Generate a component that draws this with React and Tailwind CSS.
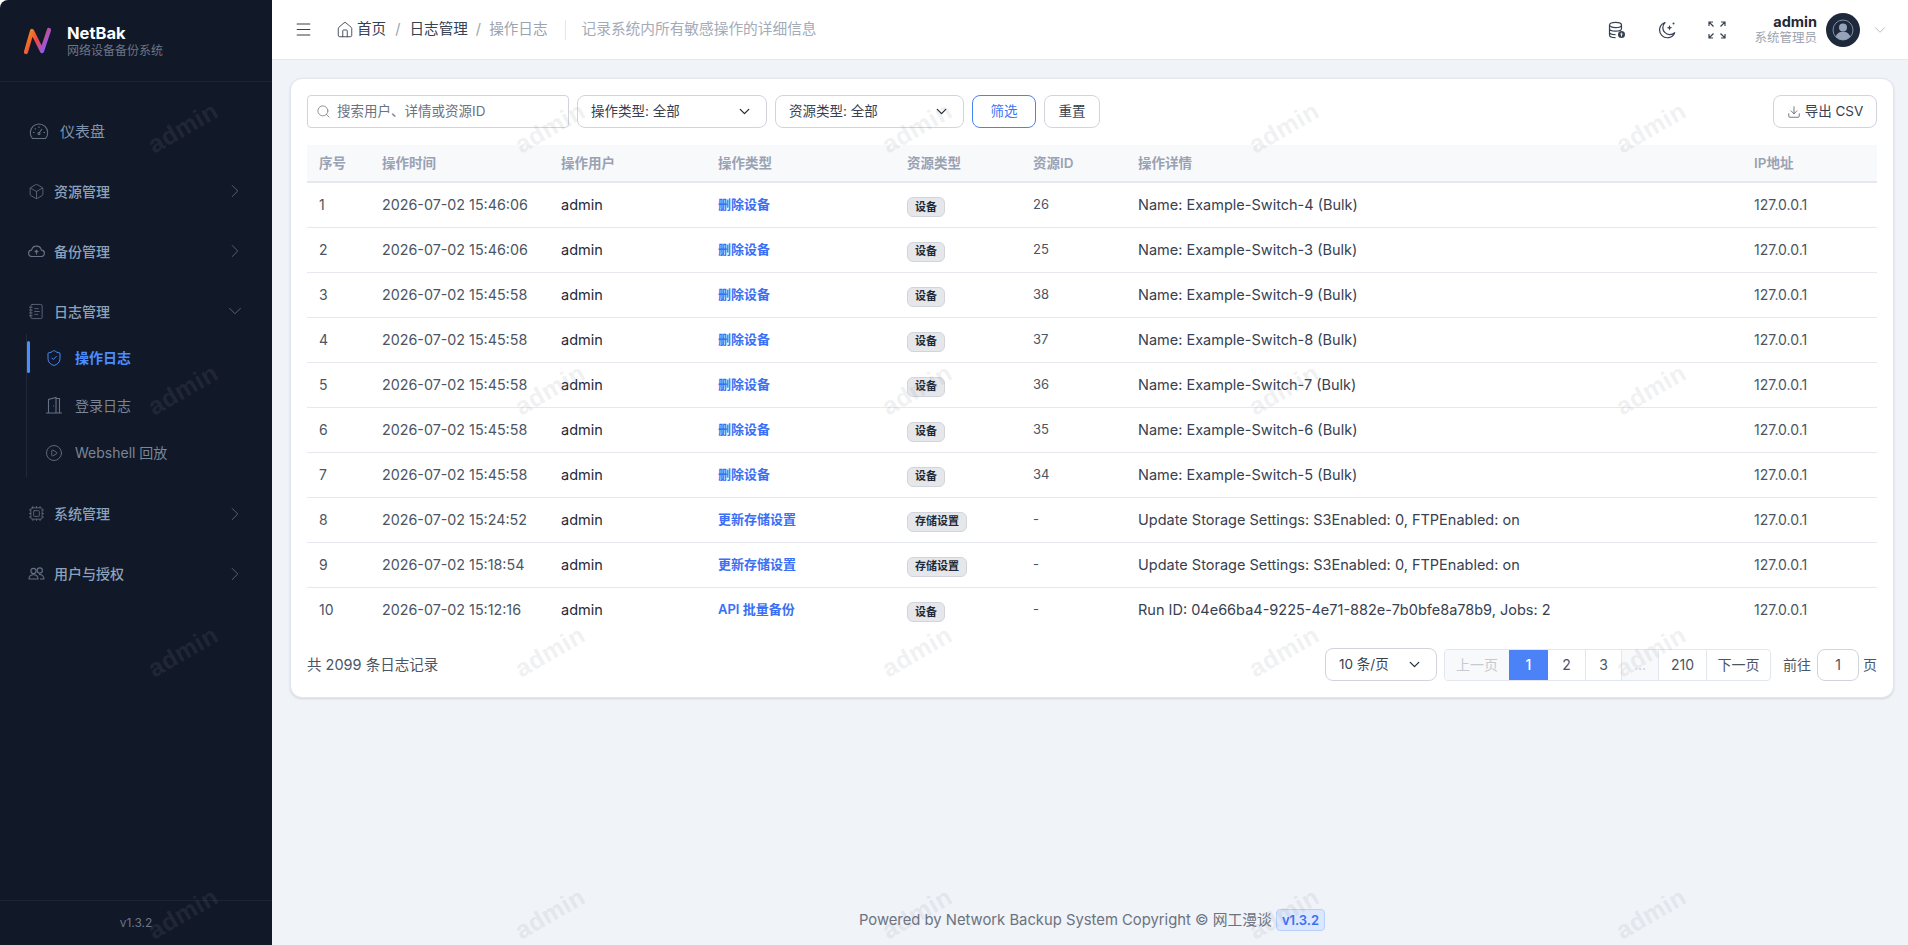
import { Box, ChevronDown, ChevronRight, CirclePlay, Cpu, Download, House, Menu, NotebookText, Search, ShieldCheck } from "lucide-react";

const font = { fontFamily: 'Inter, "Noto Sans CJK SC", sans-serif' };

const rows = [
	[1, "2026-07-02 15:46:06", "删除设备", "设备", "26", "Name: Example-Switch-4 (Bulk)"],
	[2, "2026-07-02 15:46:06", "删除设备", "设备", "25", "Name: Example-Switch-3 (Bulk)"],
	[3, "2026-07-02 15:45:58", "删除设备", "设备", "38", "Name: Example-Switch-9 (Bulk)"],
	[4, "2026-07-02 15:45:58", "删除设备", "设备", "37", "Name: Example-Switch-8 (Bulk)"],
	[5, "2026-07-02 15:45:58", "删除设备", "设备", "36", "Name: Example-Switch-7 (Bulk)"],
	[6, "2026-07-02 15:45:58", "删除设备", "设备", "35", "Name: Example-Switch-6 (Bulk)"],
	[7, "2026-07-02 15:45:58", "删除设备", "设备", "34", "Name: Example-Switch-5 (Bulk)"],
	[8, "2026-07-02 15:24:52", "更新存储设置", "存储设置", "-", "Update Storage Settings: S3Enabled: 0, FTPEnabled: on"],
	[9, "2026-07-02 15:18:54", "更新存储设置", "存储设置", "-", "Update Storage Settings: S3Enabled: 0, FTPEnabled: on"],
	[10, "2026-07-02 15:12:16", "API 批量备份", "设备", "-", "Run ID: 04e66ba4-9225-4e71-882e-7b0bfe8a78b9, Jobs: 2"],
];

const columns = [
	["序号", "w-[63px]"],
	["操作时间", "w-[179px]"],
	["操作用户", "w-[157px]"],
	["操作类型", "w-[189px]"],
	["资源类型", "w-[126px]"],
	["资源ID", "w-[105px]"],
	["操作详情", "w-[616px]"],
	["IP地址", "w-[135px]"],
];

const GaugeIcon = () => (
	<svg width="20" height="20" viewBox="0 0 20 20" fill="none" stroke="currentColor" strokeWidth="1.1" className="text-[#667085]">
		<path d="M3.500 16.500A8.700 8.700 0 1 1 16.500 16.500Z" strokeLinejoin="round" />
		<path d="M10 11l3-4M4 10.500h1.500M14.500 10.500H16M10 4.500V6M5.800 6.300l1 1" />
		<circle cx="10" cy="11.500" r="1" />
	</svg>
);

const CloudIcon = () => (
	<svg width="17" height="17" viewBox="0 0 17 17" fill="none" stroke="currentColor" strokeWidth="1.15" className="text-[#667085]">
		<path d="M4.500 13.500H4a3.200 3.200 0 0 1-.4-6.400 5 5 0 0 1 9.800 0 3.200 3.200 0 0 1-.4 6.400Z" strokeLinejoin="round" />
		<path d="M8.500 11.500V7.500M6.700 9.200l1.800-1.800 1.800 1.800" />
	</svg>
);

const PeopleIcon = () => (
	<svg width="17" height="17" viewBox="0 0 17 17" fill="none" stroke="currentColor" strokeWidth="1.1" className="text-[#667085]">
		<circle cx="5.500" cy="6" r="2.600" />
		<circle cx="11.800" cy="5.500" r="2.600" />
		<path d="M1 14c0-2.600 2-4.200 4.500-4.200S10 11.400 10 14ZM11 9.500c2.800-.2 5 1.500 5 4.500h-4" strokeLinejoin="round" />
	</svg>
);

const DoorIcon = () => (
	<svg width="18" height="18" viewBox="0 0 18 18" fill="none" stroke="currentColor" strokeWidth="1.1">
		<path d="M1 17h16M3.500 17V3.500L11 1.500V17M11 2.500h3.500V17" />
		<path d="M8.500 9.500v1" />
	</svg>
);

const MoonIcon = () => (
	<svg width="18" height="18" viewBox="0 0 18 18" fill="none" stroke="currentColor" strokeWidth="1.2" className="ml-[32px]">
		<path d="M7 1.500a7.800 7.800 0 1 0 9.700 10.200A7 7 0 0 1 7 1.500Z" strokeLinejoin="round" />
		<path d="M11.500 4l.8 2 2 .8-2 .8-.8 2-.8-2-2-.8 2-.8Z" fill="currentColor" stroke="none" />
		<circle cx="15.500" cy="2.500" r="1" fill="currentColor" stroke="none" />
	</svg>
);

const NavGroup = ({ icon, label, open }) => (
	<div className="flex h-11 items-center pl-[28px] pr-[26px]">
		{icon}
		<span className="ml-[9px] text-[14px] font-medium text-[#8da2bd]">{label}</span>
		{open ? (
			<ChevronDown size={22} strokeWidth={0.9} className="ml-auto text-[#667085]" />
		) : (
			<ChevronRight size={22} strokeWidth={0.9} className="ml-auto text-[#667085]" />
		)}
	</div>
);

const SubItem = ({ icon, label, active }) => (
	<div className={`relative flex h-[47.5px] items-center pl-[18px] text-[14px] ${active ? "font-semibold text-[#4c8dff]" : "text-[#7a8699]"}`}>
		{active && <span className="absolute left-0 top-[7px] h-[32px] w-[3px] rounded-full bg-[#4c8dff]" />}
		<span className={active ? "text-[#4c8dff]" : "text-[#667085]"}>{icon}</span>
		<span className="ml-[12px]">{label}</span>
	</div>
);

const Sidebar = () => (
	<aside className="flex h-full w-[272px] shrink-0 flex-col rounded-tl-[8px] bg-[#111827]">
		<div className="flex h-[82px] shrink-0 items-center border-b border-[#1b2434] pl-[22px]">
			<svg width="32" height="30" viewBox="0 0 32 30" fill="none">
				<defs>
					<linearGradient id="logo" x1="0" y1="0" x2="1" y2="0.5">
						<stop offset="0" stopColor="#f59e0b" />
						<stop offset="0.55" stopColor="#ef4444" />
						<stop offset="1" stopColor="#8b5cf6" />
					</linearGradient>
				</defs>
				<path d="M4 26 L10 5 L20 25 L27 4" stroke="url(#logo)" strokeWidth="4.2" strokeLinecap="round" strokeLinejoin="round" />
			</svg>
			<div className="ml-[13px]">
				<div className="text-[16.5px] font-bold leading-[20px] text-white">NetBak</div>
				<div className="text-[12px] leading-[16px] text-[#6b7688]">网络设备备份系统</div>
			</div>
		</div>
		<nav className="flex-1 pt-[28px]">
			<div className="flex h-11 items-center pl-[29px] text-[15px] text-[#7d93ae]">
				<GaugeIcon />
				<span className="ml-[11px]">仪表盘</span>
			</div>
			<div className="mt-[15px]"><NavGroup icon={<Box size={17} strokeWidth={1.15} className="text-[#667085]" />} label="资源管理" /></div>
			<div className="mt-[16px]"><NavGroup icon={<CloudIcon />} label="备份管理" /></div>
			<div className="mt-[16px]"><NavGroup icon={<NotebookText size={17} strokeWidth={1.15} className="text-[#667085]" />} label="日志管理" open /></div>
			<div className="ml-[26px] mt-[1px] border-l border-[#1f2937]">
				<SubItem active icon={<ShieldCheck size={18} strokeWidth={1.3} />} label="操作日志" />
				<SubItem icon={<DoorIcon />} label="登录日志" />
				<SubItem icon={<CirclePlay size={18} strokeWidth={1.2} />} label="Webshell 回放" />
			</div>
			<div className="mt-[15px]"><NavGroup icon={<Cpu size={17} strokeWidth={1.15} className="text-[#667085]" />} label="系统管理" /></div>
			<div className="mt-[16px]"><NavGroup icon={<PeopleIcon />} label="用户与授权" /></div>
		</nav>
		<div className="flex h-[45px] shrink-0 items-center justify-center border-t border-[#1b2434] text-[12px] text-[#6b7688]">v1.3.2</div>
	</aside>
);

const Header = () => (
	<header className="flex h-[60px] shrink-0 items-center border-b border-[#e5e8ee] bg-white">
		<Menu size={19} strokeWidth={1.3} className="ml-[22px] text-[#374151]" />
		<House size={18} strokeWidth={1.2} className="ml-[23px] text-[#374151]" />
		<span className="ml-[3px] text-[14.6px] text-[#374151]">首页</span>
		<span className="mx-[9px] text-[14.6px] text-[#9ca3af]">/</span>
		<span className="text-[14.6px] text-[#374151]">日志管理</span>
		<span className="mx-[8px] text-[14.6px] text-[#9ca3af]">/</span>
		<span className="text-[14.6px] text-[#9ca3af]">操作日志</span>
		<span className="ml-[17px] h-[20px] w-px bg-[#e5e7eb]" />
		<span className="ml-[16px] text-[14.7px] text-[#a3abb8]">记录系统内所有敏感操作的详细信息</span>
		<div className="ml-auto flex items-center text-[#374151]">
			<svg width="18" height="18" viewBox="0 0 18 18" fill="none" stroke="currentColor" strokeWidth="1.2">
				<ellipse cx="7.500" cy="4" rx="6" ry="2.600" />
				<path d="M1.500 4v10c0 1.400 2.700 2.600 6 2.600M1.500 7.500c0 1.400 2.700 2.600 6 2.600s6-1.200 6-2.600M1.500 11c0 1.400 2.700 2.600 6 2.600M13.500 4v4" />
				<circle cx="13.500" cy="13.500" r="3.500" fill="currentColor" stroke="none" />
				<path d="M13.500 15.500v-3M12.300 13.200l1.200-1 1.200 1" stroke="#fff" strokeWidth="0.9" />
			</svg>
			<MoonIcon />
			<svg width="18" height="18" viewBox="0 0 18 18" fill="none" stroke="currentColor" strokeWidth="1.2" className="ml-[32px]">
				<path d="M1 5V1h4M1 1l4.500 4.500M13 1h4v4M17 1l-4.500 4.500M1 13v4h4M1 17l4.500-4.500M17 13v4h-4M17 17l-4.500-4.500" />
			</svg>
			<div className="ml-[13px] w-[78px] text-right">
				<div className="text-[14.5px] font-bold leading-[17px] text-[#1f2937]">admin</div>
				<div className="text-[12.5px] leading-[16px] text-[#9ca3af]">系统管理员</div>
			</div>
			<div className="ml-[9px] flex size-[34px] items-center justify-center rounded-full bg-[#1e293b]">
				<svg width="22" height="22" viewBox="0 0 22 22" fill="none">
					<circle cx="11" cy="11" r="10" stroke="#7f90a8" strokeWidth="1" />
					<circle cx="11" cy="8.500" r="4" fill="#94a3b8" />
					<path d="M3.800 17.500C5 14 8 12.800 11 12.800s6 1.200 7.200 4.700A10 10 0 0 1 11 21a10 10 0 0 1-7.200-3.500Z" fill="#94a3b8" />
				</svg>
			</div>
			<ChevronDown size={18} strokeWidth={1} className="ml-[11px] mr-[19px] text-[#9ca3af]" />
		</div>
	</header>
);

const SelectBox = ({ label, className }) => (
	<div className={`flex h-[33px] items-center justify-between rounded-[8px] border border-[#d1d5db] bg-white pl-[13px] pr-[13px] text-[13.5px] text-[#374151] ${className}`}>
		<span>{label}</span>
		<ChevronDown size={17} strokeWidth={1.8} className="text-[#1f2937]" />
	</div>
);

const Toolbar = () => (
	<div className="flex items-center">
		<div className="flex h-[33px] w-[262px] items-center rounded-[4px] border border-[#d1d5db] bg-white pl-[8px] text-[13.5px] text-[#6b7280]">
			<Search size={15} strokeWidth={1.2} className="text-[#6b7280]" />
			<span className="ml-[6px]">搜索用户、详情或资源ID</span>
		</div>
		<SelectBox label="操作类型: 全部" className="ml-[8px] w-[190px]" />
		<SelectBox label="资源类型: 全部" className="ml-[8px] w-[189px]" />
		<button type="button" className="ml-[8px] h-[33px] w-[64px] rounded-[8px] border border-[#4c82f7] bg-white text-[13.5px] text-[#3b76f6]">筛选</button>
		<button type="button" className="ml-[8px] h-[33px] w-[56px] rounded-[8px] border border-[#d1d5db] bg-white text-[13.5px] text-[#374151]">重置</button>
		<button type="button" className="ml-auto flex h-[33px] w-[104px] items-center justify-center rounded-[8px] border border-[#d1d5db] bg-white text-[13.5px] text-[#374151]">
			<Download size={14} strokeWidth={1.2} />
			<span className="ml-[4px]">导出 CSV</span>
		</button>
	</div>
);

const LogTable = () => (
	<table className="mt-[17px] w-full table-fixed border-collapse">
		<colgroup>
			{columns.map(([name, width]) => (
				<col key={name} className={width} />
			))}
		</colgroup>
		<thead>
			<tr className="h-[37px] border-b-2 border-[#e5e8f0] bg-[#f8f9fb]">
				{columns.map(([name]) => (
					<th key={name} className="pl-[12px] text-left text-[13.5px] font-semibold text-[#98a2b3]">{name}</th>
				))}
			</tr>
		</thead>
		<tbody>
			{rows.map(([no, time, action, type, id, detail], index) => (
				<tr key={no} className={`h-[45px] ${index < rows.length - 1 ? "border-b border-[#e5e8f0]" : ""}`}>
					<td className="pl-[12px] text-[14px] text-[#4b5563]">{no}</td>
					<td className="pl-[12px] text-[14.3px] text-[#4b5563]">{time}</td>
					<td className="pl-[12px] text-[14.5px] text-[#1f2937]">admin</td>
					<td className="pl-[12px] text-[13px] font-semibold text-[#3b6ff5]">{action}</td>
					<td className="pl-[12px]">
						<span className="inline-flex h-[20px] items-center rounded-[6px] border border-[#d1d5db] bg-[#e5e7eb] px-[7px] text-[11px] font-semibold text-[#1f2937]">{type}</span>
					</td>
					<td className="pl-[12px] text-[13px] text-[#4b5563]">{id}</td>
					<td className="pl-[12px] text-[14.5px] text-[#374151]">{detail}</td>
					<td className="pl-[12px] text-[14px] text-[#4b5563]">127.0.0.1</td>
				</tr>
			))}
		</tbody>
	</table>
);

const PageCell = ({ children, className }) => (
	<div className={`flex h-full items-center justify-center border-l border-[#e2e6ee] text-[14px] ${className}`}>{children}</div>
);

const Pagination = () => (
	<div className="mt-[16px] flex items-center">
		<span className="text-[14.5px] text-[#4b5563]">共 2099 条日志记录</span>
		<SelectBox label="10 条/页" className="ml-auto h-[32px] w-[112px]" />
		<div className="ml-[7px] flex h-[32px] w-[327px] overflow-hidden rounded-[4px] border border-[#e2e6ee] bg-white">
			<PageCell className="w-[64px] border-l-0 bg-[#f8f9fb] text-[#c5cad3]">上一页</PageCell>
			<PageCell className="w-[39px] border-l-0 bg-[#4c82f7] font-medium text-white">1</PageCell>
			<PageCell className="w-[37px] border-l-0 text-[#4b5563]">2</PageCell>
			<PageCell className="w-[36px] text-[#4b5563]">3</PageCell>
			<PageCell className="w-[37px] bg-[#f8f9fb] text-[#c5cad3]">...</PageCell>
			<PageCell className="w-[48px] text-[#4b5563]">210</PageCell>
			<PageCell className="flex-1 text-[#4b5563]">下一页</PageCell>
		</div>
		<span className="ml-[12px] text-[14px] text-[#4b5563]">前往</span>
		<div className="ml-[6px] flex h-[32px] w-[42px] items-center justify-center rounded-[8px] border border-[#d1d5db] text-[14px] text-[#4b5563]">1</div>
		<span className="ml-[4px] text-[14px] text-[#4b5563]">页</span>
	</div>
);

// 水印层
const Watermark = () => (
	<div className="pointer-events-none absolute left-0 top-[-3px] grid grid-cols-[repeat(5,367px)] grid-rows-[repeat(4,262px)]">
		{Array.from({ length: 20 }, (_, i) => (
			<div key={i} className="flex items-center justify-center">
				<span className="-rotate-[30deg] text-[25px] font-bold tracking-[0.5px] text-[#8b8f98]/15" style={{ fontFamily: '"Liberation Sans", sans-serif' }}>admin</span>
			</div>
		))}
	</div>
);

export default function App() {
	return (
		<div className="relative flex h-[945px] w-full overflow-hidden bg-white" style={font}>
			<Sidebar />
			<div className="flex min-w-0 flex-1 flex-col bg-[#f0f3f8]">
				<Header />
				<main className="flex flex-1 flex-col pl-[18px] pr-[14px] pt-[18px]">
					<section className="h-[620px] rounded-[12px] border border-[#e2e6ee] bg-white px-[16px] pt-[16px] shadow-sm">
						<Toolbar />
						<LogTable />
						<Pagination />
					</section>
					<footer className="mt-auto flex h-[50px] items-center justify-center text-[14.8px] text-[#6b7280]">
						<span>Powered by Network Backup System Copyright © 网工漫谈</span>
						<span className="ml-[4px] rounded-[4px] border border-[#b9d0fb] bg-[#dbe7fd] px-[5px] text-[13px] font-semibold leading-[20px] text-[#3b6ff5]">v1.3.2</span>
					</footer>
				</main>
			</div>
			<Watermark />
		</div>
	);
}
